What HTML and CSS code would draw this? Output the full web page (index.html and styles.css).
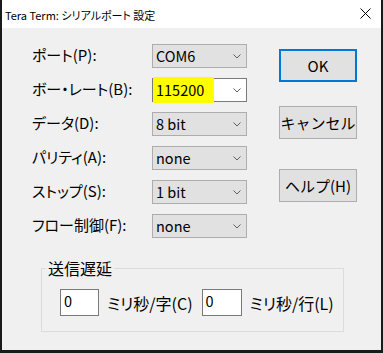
FILE: index.html
```html
<!DOCTYPE html>
<html lang="ja">
<head>
    <meta charset="UTF-8">
    <title>Tera Term: シリアルポート 設定</title>
    <link rel="stylesheet" href="styles.css">
</head>
<body>
    <div class="window">
        <div class="titlebar">
            <span class="title">Tera Term: シリアルポート 設定</span>
            <svg class="close" width="11" height="11" viewBox="0 0 11 11">
                <path d="M0.5 0.5 L10.5 10.5 M10.5 0.5 L0.5 10.5" stroke="#000" stroke-width="1" fill="none"/>
            </svg>
        </div>
        <div class="client">
            <div class="top">
                <div class="fields">
                    <label>ポート(P):</label>
                    <div class="combo"><span class="value">COM6</span><svg class="arrow" width="8" height="5" viewBox="0 0 8 5"><path d="M0.5 0.5 L4 4 L7.5 0.5" stroke="#606060" fill="none"/></svg></div>

                    <label>ボー・レート(B):</label>
                    <div class="combo edit"><span class="mark"></span><span class="value">115200</span><svg class="arrow" width="8" height="5" viewBox="0 0 8 5"><path d="M0.5 0.5 L4 4 L7.5 0.5" stroke="#606060" fill="none"/></svg></div>

                    <label>データ(D):</label>
                    <div class="combo"><span class="value">8 bit</span><svg class="arrow" width="8" height="5" viewBox="0 0 8 5"><path d="M0.5 0.5 L4 4 L7.5 0.5" stroke="#606060" fill="none"/></svg></div>

                    <label>パリティ(A):</label>
                    <div class="combo"><span class="value">none</span><svg class="arrow" width="8" height="5" viewBox="0 0 8 5"><path d="M0.5 0.5 L4 4 L7.5 0.5" stroke="#606060" fill="none"/></svg></div>

                    <label>ストップ(S):</label>
                    <div class="combo"><span class="value">1 bit</span><svg class="arrow" width="8" height="5" viewBox="0 0 8 5"><path d="M0.5 0.5 L4 4 L7.5 0.5" stroke="#606060" fill="none"/></svg></div>

                    <label>フロー制御(F):</label>
                    <div class="combo"><span class="value">none</span><svg class="arrow" width="8" height="5" viewBox="0 0 8 5"><path d="M0.5 0.5 L4 4 L7.5 0.5" stroke="#606060" fill="none"/></svg></div>
                </div>
                <div class="buttons">
                    <button class="ok">OK</button>
                    <button class="cancel">キャンセル</button>
                    <button class="help">ヘルプ(H)</button>
                </div>
            </div>
            <fieldset class="delay">
                <legend>送信遅延</legend>
                <div class="delay-row">
                    <div class="num">0</div>
                    <span class="unit">ミリ秒/字(C)</span>
                    <div class="num wide">0</div>
                    <span class="unit">ミリ秒/行(L)</span>
                </div>
            </fieldset>
        </div>
    </div>
</body>
</html>
```

FILE: styles.css
```css
body {
    margin: 0;
    font-family: "Noto Sans CJK JP", "Noto Sans", sans-serif;
    font-feature-settings: "palt";
    color: #000;
}
.window {
    width: 383px;
    height: 353px;
    box-sizing: border-box;
    border-left: 2px solid #1a1a1a;
    border-right: 2px solid #1a1a1a;
    border-bottom: 3px solid #1a1a1a;
    background: #f0f0f0;
    display: flex;
    flex-direction: column;
}
.titlebar {
    height: 28px;
    background: #fff;
    display: flex;
    align-items: center;
    justify-content: space-between;
    padding: 0 10px 0 3px;
}
.title {
    font-size: 11px;
    line-height: 16px;
    margin-top: 1px;
}
.close {
    display: block;
    margin-top: -1px;
}
.client {
    flex-grow: 1;
    padding-top: 16px;
}
.top {
    display: flex;
}
.fields {
    display: grid;
    grid-template-columns: 120px 95px;
    grid-auto-rows: 24px;
    row-gap: 10px;
    padding-left: 30px;
}
.fields label {
    font-size: 15px;
    line-height: 24px;
    margin-top: -1px;
}
.combo {
    position: relative;
    display: flex;
    align-items: center;
    justify-content: space-between;
    box-sizing: border-box;
    height: 24px;
    border: 1px solid #adadad;
    background: #e1e1e1;
    padding: 0 4px 0 3px;
    font-size: 14.5px;
}
.combo.edit {
    background: #fff;
    border-color: #7a7a7a;
}
.value {
    position: relative;
    z-index: 1;
    line-height: 22px;
}
.arrow {
    display: block;
    margin-right: 1px;
}
.mark {
    position: absolute;
    left: 0;
    top: -2px;
    width: 61px;
    height: 26px;
    background: #ffff00;
}
.buttons {
    display: flex;
    flex-direction: column;
    margin-left: 32px;
    padding-top: 5px;
}
.buttons button {
    width: 78px;
    height: 33px;
    box-sizing: border-box;
    border: 1px solid #adadad;
    background: #e1e1e1;
    font-family: inherit;
    font-size: 15px;
    padding: 0;
    color: #000;
}
.buttons .ok {
    border: 2px solid #0078d7;
}
.buttons .cancel {
    margin-top: 24px;
    white-space: nowrap;
}
.buttons .help {
    margin-top: 30px;
}
.delay {
    margin: 20px 0 0 39px;
    width: 303px;
    box-sizing: border-box;
    border: 1px solid #dcdcdc;
    padding: 11px 0 15px 18px;
    min-width: 0;
}
.delay legend {
    font-size: 16px;
    line-height: 20px;
    padding: 0 2px;
    margin-left: -14px;
}
.delay-row {
    display: flex;
    align-items: center;
}
.num {
    width: 39px;
    height: 27px;
    box-sizing: border-box;
    border: 1px solid #7a7a7a;
    background: #fff;
    font-size: 14.5px;
    line-height: 22px;
    padding-left: 3px;
}
.num.wide {
    width: 40px;
    margin-left: 9px;
}
.unit {
    font-size: 16px;
    margin-left: 8px;
}
```
